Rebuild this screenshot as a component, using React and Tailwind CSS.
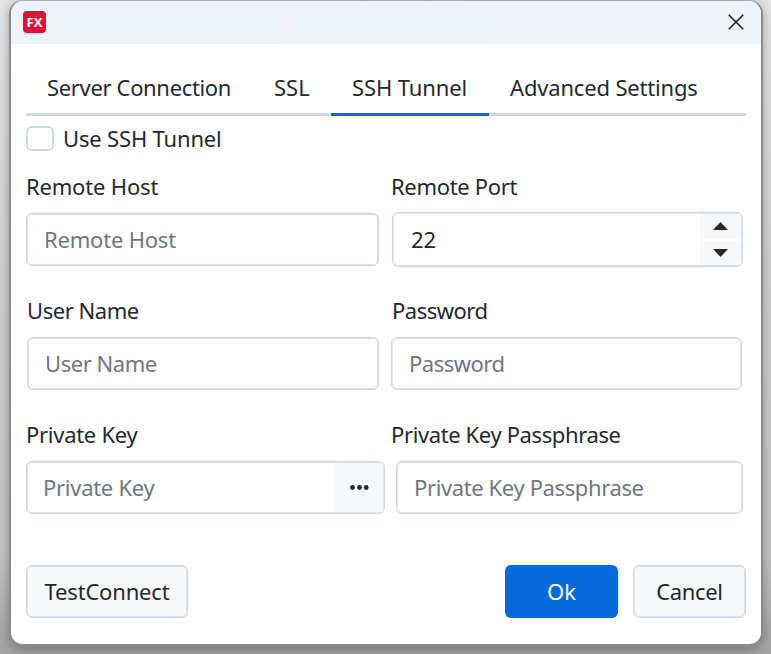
function Field({ label, labelClass = "", boxClass = "", children }) {
  return (
    <div>
      <div className={`-mt-px h-[30px] leading-[30px] whitespace-nowrap ${labelClass}`}>{label}</div>
      <div className={`flex items-center overflow-hidden rounded-[6px] border border-[#d1d7e0] bg-white p-px shadow-[inset_0_0_0_1px_#e0e5eb] ${boxClass}`}>
        {children}
      </div>
    </div>
  );
}

function Input({ placeholder, value, className = "pl-4" }) {
  return (
    <input
      className={`h-[30px] min-w-0 flex-1 bg-transparent outline-none placeholder:text-[#6e7781] ${className}`}
      placeholder={placeholder}
      defaultValue={value}
    />
  );
}

export default function App() {
  return (
    <div className="h-[654px] w-[771px] overflow-hidden bg-[linear-gradient(to_bottom,#e6e6e6,#d2d2d2_40%,#c4c4c4_85%,#a4a4a4_99%)] pl-[9px] font-['Noto_Sans','Open_Sans',sans-serif] text-[22px] text-[#24292f]">
      <div className="h-[647px] w-[754px] overflow-hidden rounded-[14px] border-x-2 border-t border-b-[3px] border-[#8b8b8b] border-t-[#a8a8a8] bg-white shadow-[0_2px_12px_rgba(0,0,0,0.3)]">
        <header className="flex h-[43px] items-center justify-between bg-linear-to-r from-[#edf3f8] to-[#f0f3fb] pr-[17px] pb-[2px] pl-3">
          <div className="flex h-[22px] w-[23px] items-center justify-center rounded-[4px] bg-[#dc143c] pt-px font-['Open_Sans',sans-serif] text-[13px] leading-none font-bold text-white">
            FX
          </div>
          <svg width="16" height="16" viewBox="0 0 16 16" fill="none" stroke="#111" strokeWidth="1.4">
            <path d="M.7.7 15.3 15.3M15.3.7.7 15.3" />
          </svg>
        </header>

        <main className="pl-[15px]">
          <nav className="mt-[22px] flex h-[50px] w-[720px] border-b-3 border-[#d1d7e0] leading-[43px] whitespace-nowrap">
            <div className="w-[227px] pl-[21px] tracking-[-0.34px]">Server Connection</div>
            <div className="w-[78px] pl-[21px]">SSL</div>
            <div className="h-[50px] w-[158px] border-b-3 border-[#0969da] pl-[21px] tracking-[-0.1px]">SSH Tunnel</div>
            <div className="pl-[21px] tracking-[-0.17px]">Advanced Settings</div>
          </nav>

          <label className="mt-[9px] flex h-[28px] items-start gap-[9px]">
            <span className="mt-px h-[25px] w-[28px] rounded-[6px] border-2 border-[#d1d7e0]" />
            <span className="leading-[26px] tracking-[-0.17px]">Use SSH Tunnel</span>
          </label>

          <div className="mt-[19px] flex h-[124px] gap-[13px]">
            <Field label="Remote Host" labelClass="tracking-[-0.18px]" boxClass="mt-[12px] h-[53px] w-[353px]">
              <Input placeholder="Remote Host" className="pl-4 tracking-[-0.2px]" />
            </Field>
            <Field label="Remote Port" labelClass="-ml-px tracking-[-0.32px]" boxClass="mt-[11px] h-[55px] w-[351px]">
              <Input value="22" className="pl-[17px]" />
              <div className="flex h-full w-[41px] flex-col gap-[2px]">
                <button className="flex flex-1 items-center justify-center bg-[#f6f8fa]">
                  <svg width="15" height="8" viewBox="0 0 15 8"><path d="M0 8 7.5 0 15 8Z" fill="#24292f" /></svg>
                </button>
                <button className="flex flex-1 items-center justify-center bg-[#f6f8fa]">
                  <svg width="15" height="8" viewBox="0 0 15 8"><path d="M0 0 7.5 8 15 0Z" fill="#24292f" /></svg>
                </button>
              </div>
            </Field>
          </div>

          <div className="flex h-[124px] gap-3 pl-px">
            <Field label="User Name" labelClass="tracking-[-0.45px]" boxClass="mt-[12px] h-[53px] w-[352px]">
              <Input placeholder="User Name" className="pl-4 tracking-[-0.45px]" />
            </Field>
            <Field label="Password" labelClass="pl-px tracking-[-0.5px]" boxClass="mt-[12px] h-[53px] w-[351px]">
              <Input placeholder="Password" className="pl-4 tracking-[-0.5px]" />
            </Field>
          </div>

          <div className="flex h-[145px] gap-[11px]">
            <Field label="Private Key" labelClass="tracking-[-0.28px]" boxClass="mt-[12px] h-[53px] w-[359px] pl-0">
              <Input placeholder="Private Key" className="pl-4 tracking-[-0.28px]" />
              <button className="flex h-full w-[49px] items-center justify-center bg-[#f6f8fa] pl-[2px]">
                <svg width="19" height="5" viewBox="0 0 19 5" fill="#24292f">
                  <circle cx="2.5" cy="2.5" r="2.4" /><circle cx="9.5" cy="2.5" r="2.4" /><circle cx="16.2" cy="2.5" r="2.4" />
                </svg>
              </button>
            </Field>
            <Field label="Private Key Passphrase" labelClass="-ml-[5px] tracking-[-0.38px]" boxClass="mt-[12px] h-[53px] w-[347px]">
              <Input placeholder="Private Key Passphrase" className="pl-4 tracking-[-0.38px]" />
            </Field>
          </div>

          <footer className="flex h-[53px] w-[720px] gap-[15px]">
            <button className="mr-auto w-[162px] rounded-[6px] border border-[#d1d7e0] bg-[#f6f8fa] tracking-[-0.18px] shadow-[inset_0_0_0_1px_#dde2e9]">TestConnect</button>
            <button className="w-[113px] rounded-[6px] bg-[#0969da] text-white">Ok</button>
            <button className="w-[113px] rounded-[6px] border border-[#d1d7e0] bg-[#f6f8fa] tracking-[-0.35px] shadow-[inset_0_0_0_1px_#dde2e9]">Cancel</button>
          </footer>
        </main>
      </div>
    </div>
  );
}
